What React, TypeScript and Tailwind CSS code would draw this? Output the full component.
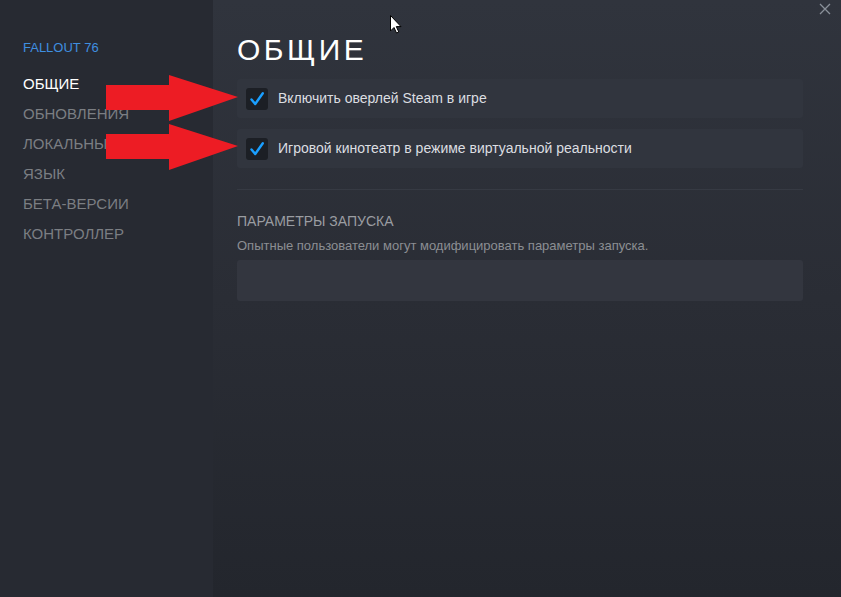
const nav = ['ОБЩИЕ', 'ОБНОВЛЕНИЯ', 'ЛОКАЛЬНЫЕ ФАЙЛЫ', 'ЯЗЫК', 'БЕТА-ВЕРСИИ', 'КОНТРОЛЛЕР']

const options = [
  'Включить оверлей Steam в игре',
  'Игровой кинотеатр в режиме виртуальной реальности',
]

function Check() {
  return (
    <span className="flex h-[22px] w-[22px] shrink-0 items-center justify-center rounded-[3px] bg-[#1c1f25]">
      <svg width="16" height="16" viewBox="0 0 16 16" fill="none">
        <path d="M2.5 8.5 L6.2 13 L13.8 2.2" stroke="#1a9fff" strokeWidth="2.4" strokeLinecap="round" strokeLinejoin="round" />
      </svg>
    </span>
  )
}

// red annotation arrow drawn over the screenshot
function Arrow({ className }: { className: string }) {
  return (
    <svg className={className} width="134" height="48" viewBox="0 0 134 48">
      <polygon points="0,10 63,10 63,0 132,22 63,46 63,35 0,35" fill="#ed1c24" />
    </svg>
  )
}

export default function App() {
  return (
    <div
      className="relative flex h-[597px] w-[841px] overflow-hidden"
      style={{ fontFamily: '"Liberation Sans", Arial, sans-serif' }}
    >
      <aside className="flex w-[213px] shrink-0 flex-col bg-[#272a32] pl-[23px] pt-[38px]">
        <div className="text-[13px] text-[#3f8fe0]">FALLOUT 76</div>
        <ul className="mt-[11px] flex flex-col">
          {nav.map((item, i) => (
            <li
              key={item}
              className={`h-[30px] text-[15px] leading-[30px] ${i === 0 ? 'text-white' : 'text-[#7b7e83]'}`}
            >
              {item}
            </li>
          ))}
        </ul>
      </aside>

      <main className="flex flex-1 flex-col bg-gradient-to-b from-[#30343d] via-[#2a2d35] to-[#23262d] pl-[24px] pr-[38px] pt-[31px]">
        <h1 className="text-[30px] leading-[38px] tracking-[3.5px] text-white">ОБЩИЕ</h1>

        <div className="mt-[10px] flex flex-col gap-[11px]">
          {options.map(label => (
            <label key={label} className="flex h-[39px] items-center gap-[10px] rounded-[3px] bg-[#31353e] pl-[9px]">
              <Check />
              <span className="text-[14px] text-[#dcdee1]">{label}</span>
            </label>
          ))}
        </div>

        <div className="mt-[21px] h-px bg-[#363a43]" />

        <div className="mt-[21px] text-[14px] text-[#9a9da2]">ПАРАМЕТРЫ ЗАПУСКА</div>
        <div className="mt-[4px] text-[13px] text-[#8b8e93]">
          Опытные пользователи могут модифицировать параметры запуска.
        </div>
        <div className="mt-[4px] h-[41px] rounded-[3px] bg-[#33363f]" />
      </main>

      <button className="absolute right-[10px] top-[3px] text-[#8a9099]">
        <svg width="12" height="12" viewBox="0 0 12 12">
          <path d="M1 1 L11 11 M11 1 L1 11" stroke="currentColor" strokeWidth="1.3" />
        </svg>
      </button>

      <svg className="absolute left-[390px] top-[15px]" width="12" height="19" viewBox="0 0 12 19">
        <path d="M0.5 0.5 V16 L4 12.5 L6.5 18 L8.8 17 L6.3 11.6 H11 Z" fill="white" stroke="black" strokeWidth="1" />
      </svg>

      <Arrow className="absolute left-[106px] top-[75px]" />
      <Arrow className="absolute left-[106px] top-[124px]" />
    </div>
  )
}
